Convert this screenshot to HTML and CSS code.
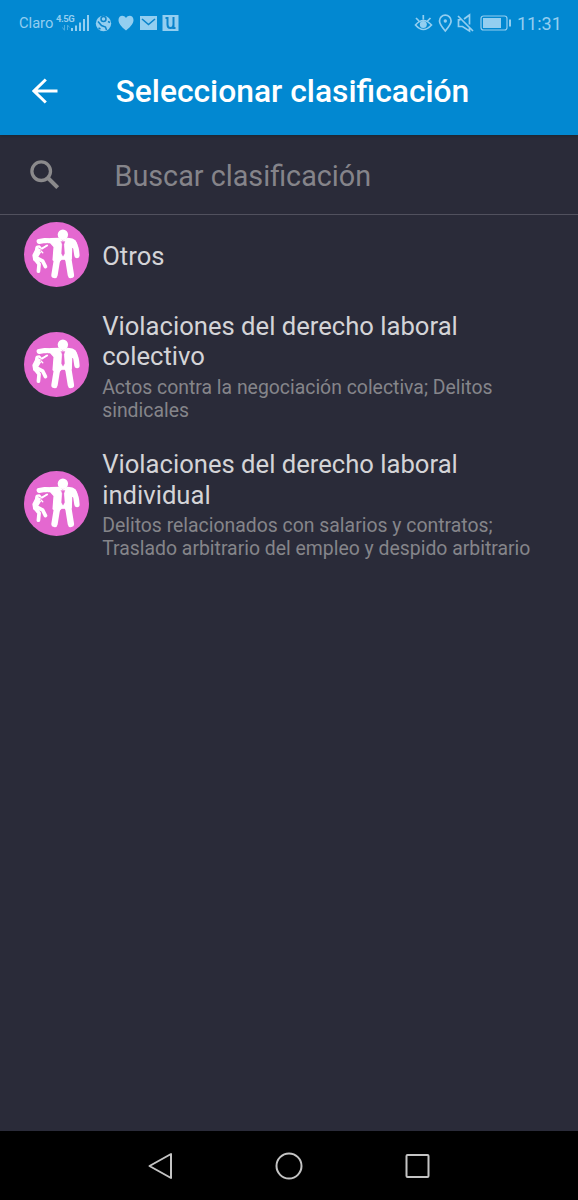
FILE: index.html
```
<!DOCTYPE html>
<html lang="es">
<head>
<meta charset="utf-8">
<title>Seleccionar clasificación</title>
<link rel="stylesheet" href="styles.css">
</head>
<body>
<svg width="0" height="0" class="defs">
  <symbol id="abuse" viewBox="28 21 194 194">
    <circle cx="125" cy="118" r="97" fill="#e468d0"/>
    <g fill="#fff" stroke="#fff" stroke-linecap="round" stroke-linejoin="round">
      <circle cx="144" cy="59" r="15.500" stroke="none"/>
      <path stroke-width="4" d="M108 71 L132 70 L144 79 L158 70 L172 72 Q182 76 185 90 L170 98 L169 130 L160 142 L151 132 L139 132 L130 142 L115 134 L118 95 L108 84 Z"/>
      <path fill="none" stroke-width="15" d="M116 77 L90 76 L73 79"/>
      <path fill="none" stroke-width="16" d="M176 82 Q185 98 186 121"/>
      <path fill="none" stroke-width="19" d="M127 130 L119 179 M160 130 L168 179"/>
      <path fill="none" stroke-width="12" d="M67 105 L59 121 L61 132"/>
      <path stroke="none" d="M61 103 Q61 89 74 90 L80 96 L79 111 L69 128 L60 129 Z"/>
      <path fill="none" stroke-width="11" d="M61 132 L73 147 L71 168 M67 129 L84 138 L92 154"/>
      <path fill="none" stroke-width="6" d="M80 101 L97 91"/>
      <path fill="none" stroke-width="4" d="M78 107 L84 113"/>
    </g>
    <g fill="none" stroke="#e468d0" stroke-linecap="round">
      <path d="M62 90 Q76 87 86 92 L98 85" stroke-width="2.500"/>
      <path d="M72 99 L80 103 L77 109" stroke-width="2"/>
      <path d="M139 79 L150 79 L147 88 L149 115 L144.500 123 L140 115 L142 88 Z" fill="#e468d0" stroke-width="1"/>
    </g>
  </symbol>
</svg>
<div class="screen">
  <header class="top">
    <div class="status">
      <span class="carrier">Claro</span>
      <span class="net">4.5G</span>
      <svg class="left-icons" width="124" height="24" viewBox="0 0 124 24">
        <g fill="#93cef0">
          <path d="M15 17h2v3h-2zM19 14.500h2v5.500h-2zM23 11.500h2v8.500h-2zM27 8h2v12h-2zM31 4h2v16H31z"/>
          <path d="M8.500 14v5M6.500 16.500l2 3 M11.500 19v-5l2 2.500" fill="none" stroke="#4dade0"/>
          <circle cx="47.500" cy="12.500" r="7.700"/>
          <path d="M70 19.500C65 15.500 62.500 12.500 62.500 9C62.500 4 68 3.500 70 7C72 3.500 77.500 4 77.500 9C77.500 12.500 75 15.500 70 19.500Z"/>
          <path d="M84 5h17v14H84z"/>
          <path d="M106.500 4h16v16h-16z"/>
        </g>
        <g fill="none" stroke="#0b84cb" stroke-width="1.500">
          <path d="M42 10.500l3.500 4 4 1.500 1 3M42.500 17l2 1M52 10.500l2 1"/>
          <circle cx="47.500" cy="8" r="2.500"/>
          <path d="M86 8l6.500 5.500L99 8" stroke-width="1.600"/>
          <path d="M111.500 6v7.500q0 3.500 3 3.500t3-3.500V6M117.500 6v11h2M109.500 7h2" stroke-width="2"/>
        </g>
      </svg>
      <svg class="right-icons" width="100" height="24" viewBox="0 0 100 24">
        <g fill="none" stroke="#93cef0" stroke-width="1.700">
          <path d="M1.500 14Q9.300 5 17.500 14Q9.300 23 1.500 14ZM2 7l3 3M9.300 4v4.500M16.500 7l-3 3"/>
          <circle cx="9.300" cy="13.500" r="3.500" fill="#93cef0" stroke="none"/>
          <path d="M31.300 20C27 15 25.500 12.500 25.500 10A5.800 5.800 0 0 1 37.100 10C37.100 12.500 35.500 15 31.300 20Z"/>
          <circle cx="31.300" cy="10" r="1.700" fill="#93cef0" stroke="none"/>
          <path d="M44 5l15 15M50 8l5.500-4v9.500M46.500 8.800H44.500v6.700h4l7 4.500v-3"/>
          <rect x="67" y="5" width="26" height="14" rx="2.500" stroke-width="1.200"/>
          <path d="M69 7h18v10H69z" fill="#93cef0" stroke="none"/>
          <path d="M96 8.500v7" stroke-width="2"/>
        </g>
      </svg>
      <span class="clock">11:31</span>
    </div>
    <div class="bar">
      <svg class="back" width="26" height="26" viewBox="0 0 26 26"><path d="M25.500 13H2M13.800 1.500L2 13l11.800 11.500" fill="none" stroke="#fff" stroke-width="3"/></svg>
      <h1 class="title">Seleccionar clasificación</h1>
    </div>
  </header>
  <div class="search">
    <svg class="lens" width="30" height="30" viewBox="0 0 30 30"><g fill="none" stroke="#8b8a8c"><circle cx="11.200" cy="11.200" r="9.300" stroke-width="3.300"/><path d="M18 18l9.700 9.700" stroke-width="4"/></g></svg>
    <span class="hint">Buscar clasificación</span>
  </div>
  <main class="list">
    <div class="row short">
      <svg class="badge"><use href="#abuse"/></svg>
      <div class="text"><div class="name">Otros</div></div>
    </div>
    <div class="row">
      <svg class="badge"><use href="#abuse"/></svg>
      <div class="text">
        <div class="name">Violaciones del derecho laboral<br>colectivo</div>
        <div class="desc">Actos contra la negociación colectiva; Delitos<br>sindicales</div>
      </div>
    </div>
    <div class="row">
      <svg class="badge"><use href="#abuse"/></svg>
      <div class="text">
        <div class="name">Violaciones del derecho laboral<br>individual</div>
        <div class="desc">Delitos relacionados con salarios y contratos;<br>Traslado arbitrario del empleo y despido arbitrario</div>
      </div>
    </div>
  </main>
  <nav class="nav">
    <svg width="290" height="30" viewBox="0 0 290 30"><g fill="none" stroke="#c4c4c4" stroke-width="2" stroke-linejoin="round">
      <path d="M27 3v24L5.500 15Z"/><circle cx="145" cy="15" r="12.500"/><rect x="262.500" y="4" width="22" height="22" rx="1"/>
    </g></svg>
  </nav>
</div>
</body>
</html>
```
FILE: styles.css
```
body { margin: 0; background: #2a2b39; }
.defs { display: block; }
.screen {
  width: 578px;
  height: 1200px;
  display: flex;
  flex-direction: column;
  overflow: hidden;
  background: #2a2b39;
  font-family: Roboto, sans-serif;
}
.top {
  height: 135px;
  flex: none;
  background: #0288d1;
  position: relative;
  box-shadow: 0 1px 3px #1b2630;
}
.status {
  height: 46px;
  display: flex;
  align-items: center;
  padding: 0 16px 0 19px;
  color: #93cef0;
}
.carrier { width: 36px; font-size: 14.700px; }
.net { width: 0; white-space: nowrap; font-size: 9.500px; font-weight: 700; line-height: 10px; padding-bottom: 9px; padding-left: 1px; letter-spacing: -0.500px; }
.left-icons { flex: none; }
.right-icons { flex: none; margin-left: auto; margin-right: 3px; }
.clock { font-size: 18px; width: 45px; white-space: nowrap; }
.bar { height: 89px; display: flex; align-items: center; padding-left: 32px; }
.back { margin-right: 57.500px; }
.title { margin: 0; color: #fff; font-size: 31.800px; font-weight: 500; line-height: 40px; white-space: nowrap; }
.search {
  height: 78px;
  flex: none;
  display: flex;
  align-items: center;
  padding-left: 30px;
  padding-top: 1px;
  border-bottom: 1px solid #51515e;
}
.lens { margin-right: 54.500px; }
.hint { color: #85848a; font-size: 28.750px; line-height: 36px; padding-top: 1px; white-space: nowrap; }
.list { flex: 1; margin-top: -1px; }
.row { height: 138.500px; display: flex; align-items: center; padding-left: 24.400px; }
.short { height: 81.400px; }
.badge { width: 65px; height: 65px; flex: none; margin-right: 12.800px; }
.text { white-space: nowrap; padding-top: 2px; }
.short .text { padding-top: 3px; }
.name { color: #d4d4d7; font-size: 25.630px; line-height: 30.500px; }
.desc { color: #85858a; font-size: 19.400px; line-height: 22.700px; margin-top: 5px; margin-bottom: -2px; }
.nav { height: 69px; flex: none; background: #000; display: flex; align-items: center; justify-content: center; }
```
